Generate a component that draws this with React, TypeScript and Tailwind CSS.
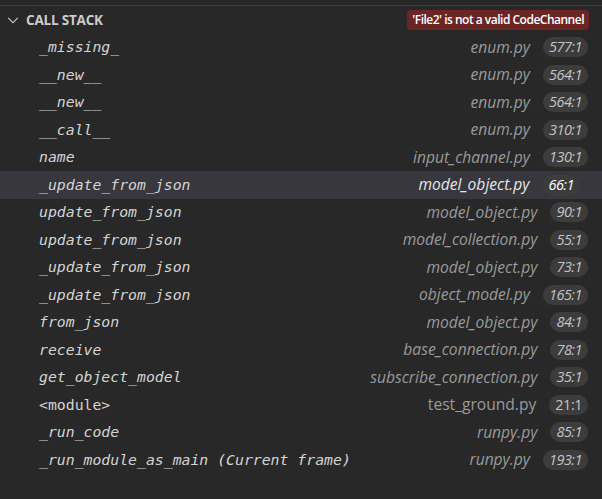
import React from 'react';

interface Frame {
  name: string;
  file: string;
  line: string;
  subtle?: boolean;
  selected?: boolean;
}

const frames: Frame[] = [
  { name: '_missing_', file: 'enum.py', line: '577:1', subtle: true },
  { name: '__new__', file: 'enum.py', line: '564:1', subtle: true },
  { name: '__new__', file: 'enum.py', line: '564:1', subtle: true },
  { name: '__call__', file: 'enum.py', line: '310:1', subtle: true },
  { name: 'name', file: 'input_channel.py', line: '130:1', subtle: true },
  { name: '_update_from_json', file: 'model_object.py', line: '66:1', subtle: true, selected: true },
  { name: 'update_from_json', file: 'model_object.py', line: '90:1', subtle: true },
  { name: 'update_from_json', file: 'model_collection.py', line: '55:1', subtle: true },
  { name: '_update_from_json', file: 'model_object.py', line: '73:1', subtle: true },
  { name: '_update_from_json', file: 'object_model.py', line: '165:1', subtle: true },
  { name: 'from_json', file: 'model_object.py', line: '84:1', subtle: true },
  { name: 'receive', file: 'base_connection.py', line: '78:1', subtle: true },
  { name: 'get_object_model', file: 'subscribe_connection.py', line: '35:1', subtle: true },
  { name: '<module>', file: 'test_ground.py', line: '21:1' },
  { name: '_run_code', file: 'runpy.py', line: '85:1', subtle: true },
  { name: '_run_module_as_main (Current frame)', file: 'runpy.py', line: '193:1', subtle: true },
];

const mono = { fontFamily: '"DejaVu Sans Mono", monospace' };

const FrameRow: React.FC<{ frame: Frame }> = ({ frame }) => (
  <div
    className={`flex items-center h-[27.5px] pl-[39px] ${
      frame.selected ? 'bg-[#37373d] pr-[22px]' : 'pr-[14px]'
    }`}
  >
    <span
      className={`text-[14.8px] text-[#d4d4d4] whitespace-pre ${frame.subtle ? 'italic' : ''}`}
      style={mono}
    >
      {frame.name}
    </span>
    <span
      className={`ml-auto text-[15.6px] ${frame.subtle ? 'italic' : ''} ${
        frame.selected ? 'text-[#e6e6e6]' : 'text-[#9a9a9a]'
      } font-['Open_Sans',sans-serif]`}
    >
      {frame.file}
    </span>
    <span
      className={`ml-[13px] h-[20px] px-[6px] rounded-full bg-[#3c3c3c] flex items-center text-[14.5px] tracking-[-0.5px] font-['Open_Sans',sans-serif] ${
        frame.subtle ? 'italic' : ''
      } ${frame.selected ? 'text-white' : 'text-[#c4c4c4]'}`}
    >
      {frame.line}
    </span>
  </div>
);

export default function App() {
  return (
    <div className="w-[602px] h-[499px] bg-[#282828] overflow-hidden">
      <div className="h-[5px]" />
      <div className="h-px bg-[#3f3f3f]" />
      <div className="flex items-center h-[27.5px] pr-[13px]">
        <svg width="14" height="14" viewBox="0 0 16 16" className="ml-[6px] mr-[6px]" fill="none">
          <path d="M2.5 5.5 8 11l5.5-5.5" stroke="#c5c5c5" strokeWidth="1.3" />
        </svg>
        <span className="text-[13.5px] font-bold text-[#cccccc] font-['Open_Sans',sans-serif] tracking-[-0.2px]">
          CALL STACK
        </span>
        <span className="ml-auto h-[20px] px-[5px] rounded-[4px] bg-[#6b2525] text-white text-[12px] font-semibold flex items-center font-['Open_Sans',sans-serif] tracking-[-0.5px]">
          'File2' is not a valid CodeChannel
        </span>
      </div>
      {frames.map((f, i) => (
        <FrameRow key={i} frame={f} />
      ))}
    </div>
  );
}
